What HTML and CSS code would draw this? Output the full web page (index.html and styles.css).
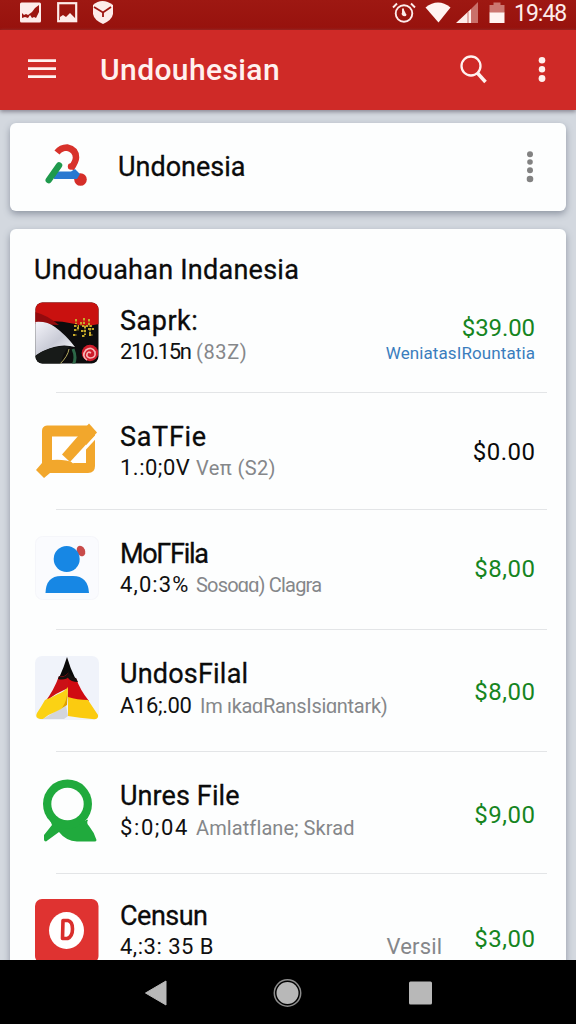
FILE: index.html
```html
<!DOCTYPE html>
<html lang="id">
<head>
<meta charset="utf-8">
<title>Undouhesian</title>
<link rel="stylesheet" href="styles.css">
</head>
<body>
<div class="phone">
  <header class="status">
    <svg class="status-left" width="120" height="30" viewBox="0 0 120 30">
      <rect x="20" y="2.500" width="21" height="20" rx="1.500" fill="#fdecea"/>
      <path d="M22 13l2 2 2-1 2 1 4-3 3-4 4-3v7l-3 6-2-1-2 1-2-3-2 3-3-1-3 1z" fill="#9c1510"/>
      <rect x="58.200" y="3.200" width="18" height="18" fill="none" stroke="#fdecea" stroke-width="2.200"/>
      <path d="M60 21v-4l3-2 3 2 4-4 7 7v2z" fill="#fdecea"/>
      <path d="M93 5q9-8 20 0v9q-1 6-10 10q-9-4-10-10z" fill="#fdecea"/>
      <path d="M94 7l9 5.500 8-5.500M103 12v5" fill="none" stroke="#9c1510" stroke-width="1.800"/>
    </svg>
    <div class="status-right">
      <svg width="116" height="30" viewBox="0 0 116 30">
        <g fill="none" stroke="#fdecea" stroke-width="1.900">
          <circle cx="13" cy="13.500" r="8.300"/>
          <path d="M2 7.500l4-4M20 3.500l4 4M12 8.500v5.500l3 1.500"/>
        </g>
        <path d="M10.500 14l2-5 3 6q-3 3-5-1z" fill="#fdecea"/>
        <path d="M34.500 7.500q12.500-10 25 0L47.500 22.500z" fill="#fff4f2"/>
        <path d="M65 23L80 9v14z" fill="#fdecea"/>
        <path d="M80 9l7-7v21h-7z" fill="#c9706a"/>
        <path d="M77 12v11" stroke="#c9706a"/>
        <path d="M98.500 5h4V2.500h7V5h4v8h-15z" fill="#cc7771"/>
        <path d="M98.500 12.500h15V23h-15z" fill="#fff4f2"/>
      </svg>
      <span class="clock">19:48</span>
    </div>
  </header>
  <nav class="appbar">
    <svg class="menu" width="30" height="24" viewBox="0 0 30 24"><path d="M1 2.700h28M1 10.700h28M1 18.700h28" stroke="#fff1ef" stroke-width="2.700"/></svg>
    <h1 class="app-title">Undouhesian</h1>
    <svg class="search" width="32" height="32" viewBox="0 0 32 32" fill="none" stroke="#fff1ef"><circle cx="12" cy="12" r="9.500" stroke-width="2.300"/><path d="M18 18.500L26.500 28" stroke-width="3.500"/></svg>
    <svg class="more" width="10" height="28" viewBox="0 0 10 28" fill="#fff1ef"><circle cx="5" cy="4.300" r="3.300"/><circle cx="5" cy="13.300" r="3.200"/><circle cx="5" cy="22.500" r="3.400"/></svg>
  </nav>
  <main class="content">
    <section class="card account">
      <svg class="brand" width="48" height="50" viewBox="0 0 48 50" fill="none" stroke-linecap="round">
        <path d="M15 10.500q4-5 10-5q9 2 9 10q0 4-5 11" stroke="#d8322b" stroke-width="6.500" stroke-linecap="butt"/>
        <circle cx="29" cy="24.500" r="3.200" fill="#d8322b"/>
        <circle cx="38.500" cy="37.500" r="6.300" fill="#d52e29"/>
        <path d="M12 29.500h17l4-2.500 5 5-3 5H12z" fill="#2878d0"/>
        <path d="M6.800 38L17 23.500" stroke="#1f9a4d" stroke-width="6.500"/>
      </svg>
      <h2 class="account-name">Undonesia</h2>
      <svg class="account-more" width="10" height="36" viewBox="0 0 10 36" fill="#828282"><circle cx="5" cy="5.300" r="3"/><circle cx="5" cy="13" r="2.800"/><circle cx="5" cy="21.300" r="3"/><circle cx="5" cy="30" r="3.300"/></svg>
    </section>
    <section class="card list">
      <h2 class="list-title">Undouahan Indanesia</h2>
      <article class="row row-first">
        <svg class="icon" viewBox="0 0 64 64">
          <defs><clipPath id="tile"><rect x="0.500" y="0.500" width="63" height="61" rx="7"/></clipPath>
          <linearGradient id="silk" x1="0" y1="0" x2="1" y2="1"><stop offset="0" stop-color="#f4f4fa"/><stop offset=".55" stop-color="#c9cbd6"/><stop offset="1" stop-color="#fff"/></linearGradient></defs>
          <g clip-path="url(#tile)">
            <path d="M0 0h64v64H0z" fill="#0c0c0d"/>
            <path d="M0 0h64v22q-14 3-24 0Q20 17 0 20z" fill="#c9110f"/>
            <path d="M0 10q12 3 24 13L0 22z" fill="#930b0e"/>
            <path d="M0 20q12-1 20 5 11 8 20 20-11-3-21 0Q8 48 0 54z" fill="url(#silk)"/>
            <path d="M0 54q15-11 36-10Q28 48 26 62H0z" fill="#171a18"/>
            <path d="M38 47q4 9 0 16" stroke="#2c6646" stroke-width="3" fill="none"/>
            <path d="M34 47q-1 7-9 15" stroke="#b7ad62" fill="none"/>
            <path d="M41 17v5m5-2v4m3-8v6m5-5v6M39 24h5m3 0h11M39 28h3m4 1h4m3-2h6M38 33h4m5 1h3m4-1h4M43 25v4m7-5v9m5-7v7" stroke="#c6a92a" stroke-width="2" stroke-dasharray="2.500 1.200"/>
            <circle cx="55" cy="51" r="8.300" fill="#cf1c2a"/>
            <path d="M56 51q-3-2-4 1t3 4q6 0 5-6-3-6-9-2-5 6 1 10" fill="none" stroke="#f6b5b5" stroke-width="1.700"/>
          </g>
        </svg>
        <div class="info"><h3 class="t1">Saprk:</h3><p><b class="s1">210.15n</b> <span class="g1">(83Z)</span></p></div>
        <div class="amount"><span class="price green">$39.00</span><a class="note">WeniatasIRountatia</a></div>
      </article>
      <article class="row row-2">
        <svg class="icon" viewBox="0 0 64 64">
          <path d="M12 6.500h42l6 8V47q0 7-7 7H15l-6 5-8-8 6-7V12q0-5 5-5.500z" fill="#f2a72c"/>
          <path d="M17 17.500h34V44H39q-9-4-22-3z" fill="#fff"/>
          <path d="M37 43.500L61.500 17" stroke="#fff" stroke-width="3"/>
          <path d="M54 4.500l8 9-27 29.500-8-7.500z" fill="#f2a72c"/>
        </svg>
        <div class="info"><h3 class="t2">SaTFie</h3><p><b class="s2">1.:0;0V</b> <span class="g2">Veπ (S2)</span></p></div>
        <div class="amount"><span class="price">$0.00</span></div>
      </article>
      <article class="row row-3">
        <svg class="icon" viewBox="0 0 64 64">
          <rect x=".5" y=".5" width="63" height="63" rx="7" fill="#fafbfe" stroke="#f5f6fa"/>
          <ellipse cx="46" cy="15" rx="4" ry="5.500" transform="rotate(-25 46 15)" fill="#c84b4a"/>
          <circle cx="31.700" cy="23" r="13" fill="#1787e4"/>
          <path d="M10.500 57Q11 40 26 40h12q15 0 16 17z" fill="#1787e4"/>
        </svg>
        <div class="info"><h3 class="t3">MoΓFila</h3><p><b class="s3">4,0:3%</b> <span class="g3">Sosoɑɑ) Clagra</span></p></div>
        <div class="amount"><span class="price green">$8,00</span></div>
      </article>
      <article class="row row-4">
        <svg class="icon" viewBox="0 0 64 64">
          <rect width="64" height="64" rx="7" fill="#f0f3fa"/>
          <path d="M8 63l23-14 2 11-4 3z" fill="#d3d5dc"/>
          <path d="M32 1Q29 11 24 22l10-2 7 4Q35 12 32 1z" fill="#0a0909"/>
          <path d="M24 20q5 2 10-4v16q-12 4-24 14 9-12 14-26z" fill="#cb1016"/>
          <path d="M33 17q3 7 8 5 4 12 13 23-10 0-21-3z" fill="#d00b12"/>
          <path d="M24 20q5 3 10-4l1 4q-5 5-12 3zM33 15q4 7 8 7l2 4q-7 0-10-4z" fill="#17100f"/>
          <path d="M10 44q8-3 13-6 6-2 10-7 0 10-2 18-5 5-11 7T8 63q-9 0-6-6 4-6 8-13z" fill="#fbd214"/>
          <path d="M33 41q9 3 20 3l10 15q1 5-6 4-12-1-24-3z" fill="#fbcb10"/>
          <path d="M33 31q-1 15-6 21l5-3z" fill="#dea000"/>
        </svg>
        <div class="info"><h3 class="t4">UndosFilal</h3><p><b class="s4">A16;.00</b> <span class="g4">Im ıkaɑRansIsiɑntark)</span></p></div>
        <div class="amount"><span class="price green">$8,00</span></div>
      </article>
      <article class="row row-5">
        <svg class="icon" viewBox="0 0 64 64">
          <path d="M15 41l35 1q2-2 3-1-2 3 1 6 5 6 7.500 14 0 1.500-2 1.500H42Q31 62 24 53L11 62.500q-2 0-2-2V56l8-10z" fill="#20aa3d"/>
          <circle cx="32.500" cy="25" r="24.500" fill="#20aa3d"/>
          <circle cx="32.500" cy="25" r="16.200" fill="#fdfefe"/>
        </svg>
        <div class="info"><h3 class="t5">Unres File</h3><p><b class="s5">$:0;04</b> <span class="g5">Amlatflane; Skrad</span></p></div>
        <div class="amount"><span class="price green">$9,00</span></div>
      </article>
      <article class="row row-6">
        <svg class="icon" viewBox="0 0 64 64">
          <rect width="63.500" height="64" rx="7" fill="#df3331"/>
          <ellipse cx="31.500" cy="31.500" rx="17.500" ry="18.500" fill="#fff"/>
          <path d="M28 21.500h5q4.500 1 4.500 8.500t-5 9.500h-5z" fill="none" stroke="#d92e2c" stroke-width="3.600" stroke-linejoin="round"/>
        </svg>
        <div class="info"><h3 class="t6">Censun</h3><p><b class="s6">4,:3: 35 B</b></p></div>
        <div class="amount last"><span class="version">Versil</span><span class="price green">$3,00</span></div>
      </article>
    </section>
  </main>
  <footer class="navbar">
    <svg width="24" height="28" viewBox="0 0 24 28"><path d="M22 2v24L1.500 14z" fill="#b8b8b8" stroke="#b8b8b8" stroke-linejoin="round"/></svg>
    <svg class="home" width="30" height="30" viewBox="0 0 30 30"><circle cx="14.500" cy="15" r="13.200" fill="none" stroke="#8d8d8d" stroke-width="1.500"/><circle cx="14.500" cy="15" r="11" fill="#b8b8b8"/></svg>
    <svg width="24" height="24" viewBox="0 0 24 24"><rect x="0" y=".5" width="23" height="23" rx="1.500" fill="#b8b8b8"/></svg>
  </footer>
</div>
</body>
</html>
```
FILE: styles.css
```css
* { box-sizing: border-box; }
body, h1, h2, h3, p { margin: 0; }
body { font-family: Roboto, "Liberation Sans", sans-serif; color: #0b0b0b; }
.phone { width: 576px; height: 1024px; display: flex; flex-direction: column; overflow: hidden; background: #d3d8df; }

.status { height: 30px; flex: none; display: flex; justify-content: space-between; background: linear-gradient(#9e1812, #97120d); }
.status-right { display: flex; padding-right: 10px; }
.clock { width: 59px; padding-left: 7px; font-size: 23px; line-height: 28px; letter-spacing: -1px; color: #fdecea; white-space: nowrap; }

.appbar { height: 80px; flex: none; display: flex; align-items: center; padding: 0 29px 0 27px; background: #cf2a27; box-shadow: 0 2px 4px #8c8a95; z-index: 1; }
.app-title { flex: 1; margin-left: 43px; font-size: 30px; font-weight: 500; line-height: 40px; letter-spacing: .4px; color: #fff1ef; white-space: nowrap; }
.search { margin-right: 46px; }

.content { flex: 1; min-height: 0; overflow: hidden; display: flex; flex-direction: column; gap: 18px; padding: 13px 10px 0; }
.card { flex: none; border-radius: 6px; background: #fdfefe; box-shadow: 0 3px 7px #8f96a3; }
.account { height: 88px; display: flex; align-items: center; padding: 0 31px 0 32px; }
.account-name { flex: 1; margin-left: 28px; font-size: 27px; font-weight: 400; line-height: 36px; -webkit-text-stroke: .3px; }
.list { height: 760px; }
.list-title { height: 66px; padding: 23px 0 0 24px; font-size: 27px; font-weight: 400; line-height: 36px; letter-spacing: .25px; white-space: nowrap; -webkit-text-stroke: .3px; }

.row { position: relative; display: flex; height: 122px; padding: 26px 31px 0 25px; }
.row:not(:last-child)::after { content: ""; position: absolute; left: 46px; right: 19px; bottom: 0; height: 1px; background: #e3e5e7; }
.row-first { height: 98px; padding-top: 7px; }
.row-2 { height: 117px; }
.row-3 { height: 120px; }
.row-5 { padding-top: 27px; }
.row-6 { padding-top: 25px; }
.icon { width: 64px; height: 64px; flex: none; }
.info { flex: 1; margin-left: 21px; padding-top: 1px; white-space: nowrap; }
.row-first .info { padding-top: 2px; }
.row-5 .info, .row-6 .info { padding-top: 0; }
.info h3 { font-size: 27px; font-weight: 400; line-height: 35px; -webkit-text-stroke: .3px; }
.info p { display: flex; font-size: 20px; line-height: 26px; color: #85878a; }
.info b { width: 76px; flex: none; font-size: 22px; font-weight: 400; color: #101010; }
.row-4 .info p, .row-5 .info p { padding-top: 1px; }
.row-4 .info b { width: 80px; }
.row-6 .info b { width: auto; }

/* Tracking per label */
.t1 { letter-spacing: .5px; }
.t2 { letter-spacing: .7px; }
.t3 { letter-spacing: -1.3px; }
.t4 { letter-spacing: .2px; }
.t5 { letter-spacing: .1px; }
.t6 { letter-spacing: -.5px; }
.s1 { letter-spacing: -1.3px; }
.s2 { letter-spacing: .5px; }
.s3 { letter-spacing: 1.1px; }
.s4 { letter-spacing: -.4px; }
.s5 { letter-spacing: 1.6px; }
.s6 { letter-spacing: .5px; }
.g1 { letter-spacing: .6px; }
.g2 { letter-spacing: .4px; }
.g3 { letter-spacing: -.8px; }
.g4 { letter-spacing: -.3px; }
.g5 { letter-spacing: .1px; }

.amount { display: flex; flex-direction: column; align-items: flex-end; margin-top: 18px; white-space: nowrap; }
.price { font-size: 24px; line-height: 30px; letter-spacing: .5px; margin-right: -.5px; }
.green { color: #16851f; }
.row-first .amount { margin-top: 11px; }
.row-first .price { letter-spacing: -.1px; margin-right: 0; }
.row-4 .amount, .row-5 .amount { margin-top: 21px; }
.note { font-size: 17px; line-height: 20px; letter-spacing: .1px; color: #3a7dbd; }
.amount.last { flex-direction: row; align-items: flex-start; gap: 32px; margin-top: 25px; }
.version { padding-top: 8px; font-size: 22px; line-height: 30px; letter-spacing: .2px; color: #85878a; }

.navbar { height: 64px; flex: none; display: flex; align-items: center; padding: 2px 0 0 144px; background: #000; z-index: 1; }
.home { margin: 0 106px 0 105px; }
```
